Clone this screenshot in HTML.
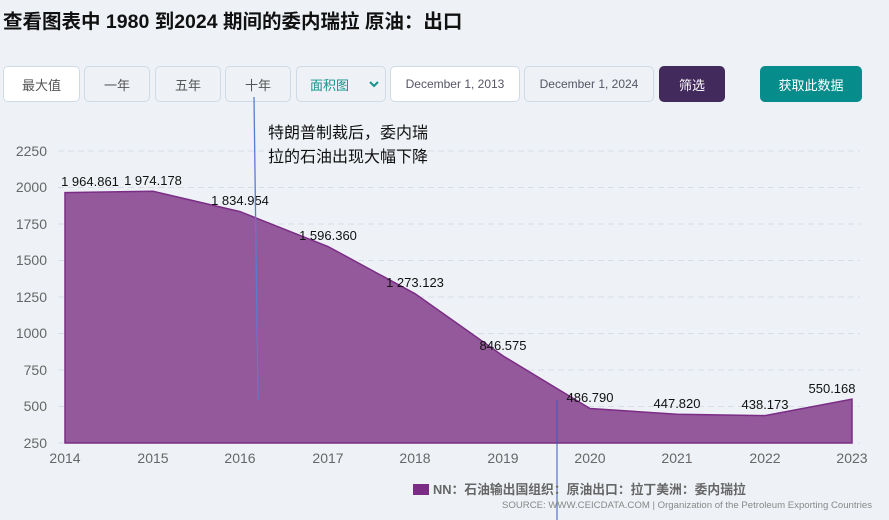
<!DOCTYPE html><html><head><meta charset="utf-8"><style>
body{margin:0;width:889px;height:520px;background:#eef2f6;font-family:"Liberation Sans","Noto Sans CJK SC",sans-serif;position:relative;overflow:hidden}
h1{position:absolute;left:3px;top:5px;margin:0;font-size:19.5px;font-weight:bold;color:#111}
.b{position:absolute;top:66px;height:36px;box-sizing:border-box;border:1px solid #cddbe6;border-radius:5px;background:#eef2f6;font-size:13px;color:#555;display:flex;align-items:center;justify-content:center}
</style></head><body>
<h1>查看图表中 1980 到2024 期间的委内瑞拉 原油：出口</h1>
<div class="b" style="left:3px;width:77px;background:#fff">最大值</div>
<div class="b" style="left:84px;width:66px">一年</div>
<div class="b" style="left:155px;width:66px">五年</div>
<div class="b" style="left:225px;width:66px">十年</div>
<div class="b" style="left:296px;width:90px;color:#14908e;justify-content:flex-start;padding-left:13px">面积图<svg style="position:absolute;right:6px;top:14px" width="10" height="7"><path d="M1,1L5,5L9,1" fill="none" stroke="#14908e" stroke-width="2"/></svg></div>
<div class="b" style="left:390px;width:130px;background:#fff;font-size:12px;color:#556">December 1, 2013</div>
<div class="b" style="left:524px;width:130px;font-size:12px;color:#556">December 1, 2024</div>
<div class="b" style="left:659px;width:66px;background:#432a5c;border-color:#432a5c;color:#fff">筛选</div>
<div class="b" style="left:760px;width:102px;background:#078c8c;border-color:#078c8c;color:#fff">获取此数据</div>
<svg style="position:absolute;left:0;top:0" width="889" height="520">
<g stroke="#d6dde5" stroke-dasharray="6,4">
<line x1="58" x2="860" y1="151" y2="151"/><line x1="58" x2="860" y1="187.5" y2="187.5"/><line x1="58" x2="860" y1="224" y2="224"/><line x1="58" x2="860" y1="260.5" y2="260.5"/><line x1="58" x2="860" y1="297" y2="297"/><line x1="58" x2="860" y1="333.5" y2="333.5"/><line x1="58" x2="860" y1="370" y2="370"/><line x1="58" x2="860" y1="406.5" y2="406.5"/><line x1="58" x2="860" y1="443" y2="443"/></g>
<g font-size="14" fill="#666" text-anchor="end"><text x="47" y="156">2250</text><text x="47" y="192">2000</text><text x="47" y="229">1750</text><text x="47" y="265">1500</text><text x="47" y="302">1250</text><text x="47" y="338">1000</text><text x="47" y="375">750</text><text x="47" y="411">500</text><text x="47" y="448">250</text></g>
<path d="M65,443L65,192.6L153,191.3L240,211.6L328,246.5L415,293.7L503,355.9L590,408.5L677,414.2L765,415.6L852,399.2L852,443Z" fill="#93599b" stroke="#7b2d86" stroke-width="1.5"/>
<g font-size="13" fill="#111" text-anchor="middle"><text x="90" y="186">1 964.861</text><text x="153" y="185">1 974.178</text><text x="240" y="205">1 834.954</text><text x="328" y="240">1 596.360</text><text x="415" y="287">1 273.123</text><text x="503" y="350">846.575</text><text x="590" y="402">486.790</text><text x="677" y="408">447.820</text><text x="765" y="409">438.173</text><text x="832" y="393">550.168</text></g>
<g font-size="14" fill="#666" text-anchor="middle"><text x="65" y="463">2014</text><text x="153" y="463">2015</text><text x="240" y="463">2016</text><text x="328" y="463">2017</text><text x="415" y="463">2018</text><text x="503" y="463">2019</text><text x="590" y="463">2020</text><text x="677" y="463">2021</text><text x="765" y="463">2022</text><text x="852" y="463">2023</text></g>
<line x1="254" y1="97" x2="258" y2="400" stroke="#5a7bd0" stroke-width="1.3"/>
<line x1="557" y1="400" x2="557" y2="520" stroke="#3b5bb8" stroke-width="1"/>
<text x="268" y="138" font-size="16" fill="#111">特朗普制裁后，委内瑞</text>
<text x="268" y="162" font-size="16" fill="#111">拉的石油出现大幅下降</text>
<rect x="413" y="484" width="16" height="11" fill="#7b2d86"/>
<text x="433" y="494" font-size="12.8" font-weight="bold" fill="#666">NN：石油输出国组织：原油出口：拉丁美洲：委内瑞拉</text>
<text x="502" y="508" font-size="9.6" fill="#888">SOURCE: WWW.CEICDATA.COM | Organization of the Petroleum Exporting Countries</text>
</svg>
</body></html>
